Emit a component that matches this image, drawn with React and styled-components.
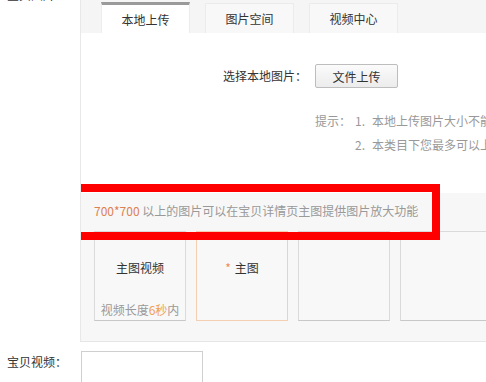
import styled, { createGlobalStyle } from "styled-components";

const GlobalStyle = createGlobalStyle`
  html, body {
    margin: 0;
    padding: 0;
    background: #fff;
    overflow: hidden;
  }
  body {
    font-family: "Noto Sans CJK SC", "Liberation Sans", sans-serif;
    font-size: 12px;
    color: #333;
  }
`;

const Page = styled.div`
  margin-top: -12px;
  width: 486px;
`;

const FormRow = styled.div`
  display: grid;
  grid-template-columns: 80px 1fr;
  margin-top: ${(p) => p.$gap || 0}px;
`;

const Label = styled.div`
  padding-left: 7px;
  margin-top: ${(p) => p.$shift || 0}px;
  line-height: ${(p) => p.$lh || 18}px;
  color: #333;
  white-space: nowrap;
`;

const Panel = styled.div`
  border-left: 1px solid #e8e8e8;
  border-bottom: 1px solid #e6e6e6;
  min-width: 0;
  overflow: hidden;
`;

const TabBar = styled.div`
  height: 45px;
  background: #f5f5f5;
  display: flex;
  align-items: flex-end;
  gap: 15px;
  padding-left: 20px;
  box-sizing: border-box;
`;

const Tab = styled.div`
  width: 89px;
  height: ${(p) => (p.$active ? 31 : 30)}px;
  box-sizing: border-box;
  border: 1px solid ${(p) => (p.$active ? "#ececec" : "#ebebeb")};
  border-top: ${(p) => (p.$active ? "3px solid #9a9a9a" : "1px solid #ebebeb")};
  border-bottom: none;
  background: ${(p) => (p.$active ? "#fff" : "#f8f8f8")};
  display: flex;
  align-items: center;
  justify-content: center;
  color: #333;
  font-size: 12px;
`;

const UploadSection = styled.div`
  height: 160px;
  padding-top: 31px;
  box-sizing: border-box;
  background: #fff;
`;

const UploadRow = styled.div`
  display: flex;
  align-items: center;
  gap: 8px;
  padding-left: 142px;
`;

const UploadLabel = styled.span`
  color: #333;
  line-height: 24px;
`;

const FileButton = styled.button`
  width: 83px;
  height: 24px;
  border: 1px solid #bdbdbd;
  border-radius: 2px;
  background: linear-gradient(#fbfbfb, #ececec);
  font-family: inherit;
  font-size: 12px;
  color: #333;
  padding: 0;
`;

const Hints = styled.div`
  margin-top: 21px;
  padding-left: 234px;
  display: grid;
  grid-template-columns: 40px 17px 1fr;
  line-height: 24px;
  color: #999;
  white-space: nowrap;
`;

const GrayArea = styled.div`
  position: relative;
  background: #f7f7f7;
  padding: 9px 0 20px 13px;
`;

const Tip = styled.div`
  line-height: 18px;
  color: #999;
  white-space: nowrap;
`;

const Orange = styled.span`
  color: ${(p) => (p.$light ? "#f0a050" : "#dc8152")};
`;

const Cards = styled.div`
  margin-top: 11px;
  display: flex;
  gap: 10px;
`;

const Card = styled.div`
  flex: 0 0 92px;
  height: 90px;
  box-sizing: border-box;
  border: 1px solid ${(p) => (p.$main ? "#f5cfb2" : "#dadada")};
  border-bottom-color: ${(p) => (p.$main ? "#f5cfb2" : "#c8c8c8")};
  background: #f8f8f8;
  display: flex;
  flex-direction: column;
  align-items: center;
  padding-top: 27px;
`;

const CardTitle = styled.div`
  line-height: 18px;
  color: #333;
`;

const CardFoot = styled.div`
  margin-top: auto;
  padding-bottom: 1px;
  line-height: 18px;
  color: #999;
  white-space: nowrap;
`;

const Star = styled.span`
  color: #f08a50;
  margin-right: 4px;
`;

const Highlight = styled.div`
  position: absolute;
  left: -11px;
  top: -9px;
  width: 370px;
  height: 56px;
  box-sizing: border-box;
  border: 8px solid #f00;
  pointer-events: none;
`;

const VideoBox = styled.div`
  width: 122px;
  height: 40px;
  margin-left: 1px;
  box-sizing: border-box;
  border: 1px solid #cfcfcf;
  background: #fff;
`;

const tabs = ["本地上传", "图片空间", "视频中心"];

export default function App() {
  return (
    <>
      <GlobalStyle />
      <Page>
        <FormRow>
          <Label $shift={-2}>宝贝图片：</Label>
          <Panel>
            <TabBar>
              {tabs.map((t, i) => (
                <Tab key={t} $active={i === 0}>
                  {t}
                </Tab>
              ))}
            </TabBar>
            <UploadSection>
              <UploadRow>
                <UploadLabel>选择本地图片：</UploadLabel>
                <FileButton>文件上传</FileButton>
              </UploadRow>
              <Hints>
                <span>提示：</span>
                <span>1.</span>
                <span>本地上传图片大小不能超过3M。</span>
                <span />
                <span>2.</span>
                <span>本类目下您最多可以上传5张图片。</span>
              </Hints>
            </UploadSection>
            <GrayArea>
              <Tip>
                <Orange>700*700</Orange> 以上的图片可以在宝贝详情页主图提供图片放大功能
              </Tip>
              <Cards>
                <Card>
                  <CardTitle>主图视频</CardTitle>
                  <CardFoot>
                    视频长度<Orange $light>6秒</Orange>内
                  </CardFoot>
                </Card>
                <Card $main>
                  <CardTitle>
                    <Star>*</Star>主图
                  </CardTitle>
                </Card>
                <Card />
                <Card />
              </Cards>
              <Highlight />
            </GrayArea>
          </Panel>
        </FormRow>
        <FormRow $gap={9}>
          <Label $lh={22}>宝贝视频：</Label>
          <VideoBox />
        </FormRow>
      </Page>
    </>
  );
}
